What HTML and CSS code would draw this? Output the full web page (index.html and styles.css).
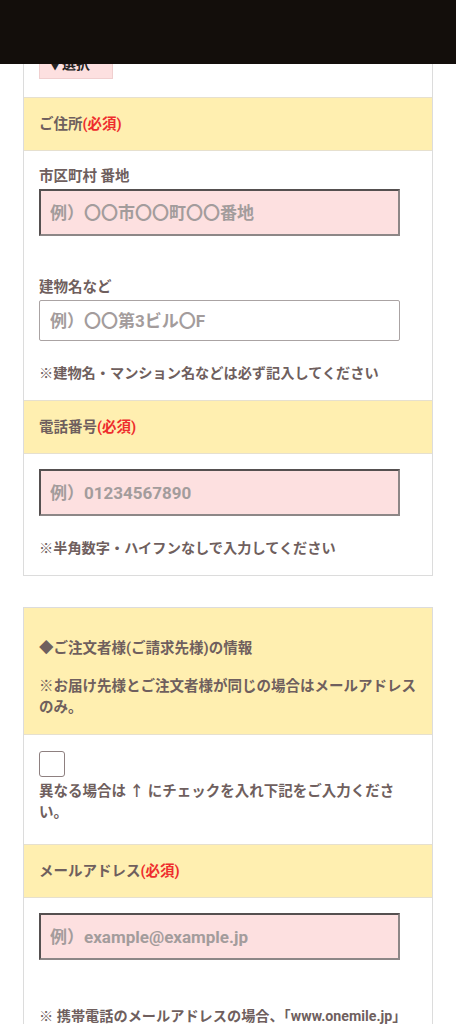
FILE: index.html
```html
<!DOCTYPE html>
<html lang="ja">
<head>
  <meta charset="utf-8">
  <title>ご注文フォーム</title>
  <meta name="viewport" content="width=device-width, initial-scale=1">
  <link rel="stylesheet" href="styles.css">
</head>
<body>
  <div class="topbar"></div>

  <div class="page">
    <div class="form-box">
      <div class="form-row select-row">
        <div class="fake-select">▼選択</div>
      </div>

      <div class="form-head">ご住所<span class="req">(必須)</span></div>
      <div class="form-row">
        <label class="label" for="addr1">市区町村 番地</label>
        <input type="text" id="addr1" class="input input-req" placeholder="例）〇〇市〇〇町〇〇番地">
        <label class="label label-gap" for="addr2">建物名など</label>
        <input type="text" id="addr2" class="input" placeholder="例）〇〇第3ビル〇F">
        <p class="note">※建物名・マンション名などは必ず記入してください</p>
      </div>

      <div class="form-head">電話番号<span class="req">(必須)</span></div>
      <div class="form-row">
        <input type="text" id="tel" class="input input-req" placeholder="例）01234567890">
        <p class="note">※半角数字・ハイフンなしで入力してください</p>
      </div>
    </div>

    <div class="form-box">
      <div class="form-head info-head">
        <p class="info-title">◆ご注文者様(ご請求先様)の情報</p>
        <p class="info-note">※お届け先様とご注文者様が同じの場合はメールアドレスのみ。</p>
      </div>
      <div class="form-row check-row">
        <input type="checkbox" id="diff" class="check">
        <label class="check-text" for="diff">異なる場合は ↑ にチェックを入れ下記をご入力ください。</label>
      </div>

      <div class="form-head">メールアドレス<span class="req">(必須)</span></div>
      <div class="form-row">
        <input type="text" id="mail" class="input input-req" placeholder="例）example@example.jp">
        <p class="note mail-note">※ 携帯電話のメールアドレスの場合、「www.onemile.jp」</p>
      </div>
    </div>
  </div>
</body>
</html>
```

FILE: styles.css
```css
body {
  margin: 0;
  background: #fff;
  font-family: Roboto, "Noto Sans CJK JP", sans-serif;
  color: #6f5f5e;
}
.topbar {
  position: fixed;
  top: 0;
  left: 0;
  right: 0;
  height: 64px;
  background: #130e0b;
  z-index: 10;
}
.page {
  padding: 0 23px;
  margin-top: 31px;
}
.form-box {
  border: 1px solid #dcdcdc;
  margin-bottom: 31px;
}
.form-row {
  padding: 15px 15px 17px;
}
.select-row {
  padding-top: 17px;
  padding-bottom: 18px;
}
.fake-select {
  width: 74px;
  height: 30px;
  box-sizing: border-box;
  background: #fde0e0;
  border: 1px solid #f0cfcf;
  color: #222;
  font-size: 14px;
  font-weight: bold;
  line-height: 28px;
  padding-left: 8px;
}
.form-head {
  background: #ffefb0;
  border-top: 1px solid #e6e0cf;
  border-bottom: 1px solid #e6e0cf;
  padding: 16px 15px 15px;
  font-size: 14.5px;
  font-weight: bold;
  line-height: 21px;
}
.form-box > .form-head:first-child {
  border-top: none;
}
.req {
  color: #ee2d2d;
}
.label {
  display: block;
  font-size: 14.5px;
  font-weight: bold;
  line-height: 20px;
  margin-top: 1px;
  margin-bottom: 2px;
}
.label-gap {
  margin-top: 42px;
}
.input {
  display: block;
  width: 361px;
  height: 41px;
  box-sizing: border-box;
  border: 1px solid #aaa3a3;
  border-radius: 2px;
  background: #fff;
  padding: 0 10px;
  font-family: Roboto, "Noto Sans CJK JP", sans-serif;
  font-size: 17px;
  font-weight: bold;
  color: #333;
}
.input::placeholder {
  color: #a39c9c;
}
.input-req {
  height: 47px;
  background: #fde0e0;
  border-width: 2px;
  border-radius: 0;
  border-color: #555050 #8d8787 #8d8787 #555050;
  padding-left: 9px;
}
.note {
  margin: 22px 0 0;
  font-size: 14.2px;
  font-weight: bold;
  line-height: 20px;
}
.mail-note {
  margin-top: 46px;
}
.info-head {
  padding: 30px 15px 16px;
}
.info-title {
  margin: 0;
}
.info-note {
  margin: 17px 0 0;
}
.check-row {
  padding-top: 16px;
  padding-bottom: 21px;
}
.check {
  display: block;
  appearance: none;
  -webkit-appearance: none;
  width: 26px;
  height: 26px;
  margin: 0 0 4px;
  border: 1px solid #8e8080;
  border-radius: 3px;
  background: #fff;
}
.check-text {
  display: block;
  font-size: 14.5px;
  font-weight: bold;
  line-height: 21px;
}
```
